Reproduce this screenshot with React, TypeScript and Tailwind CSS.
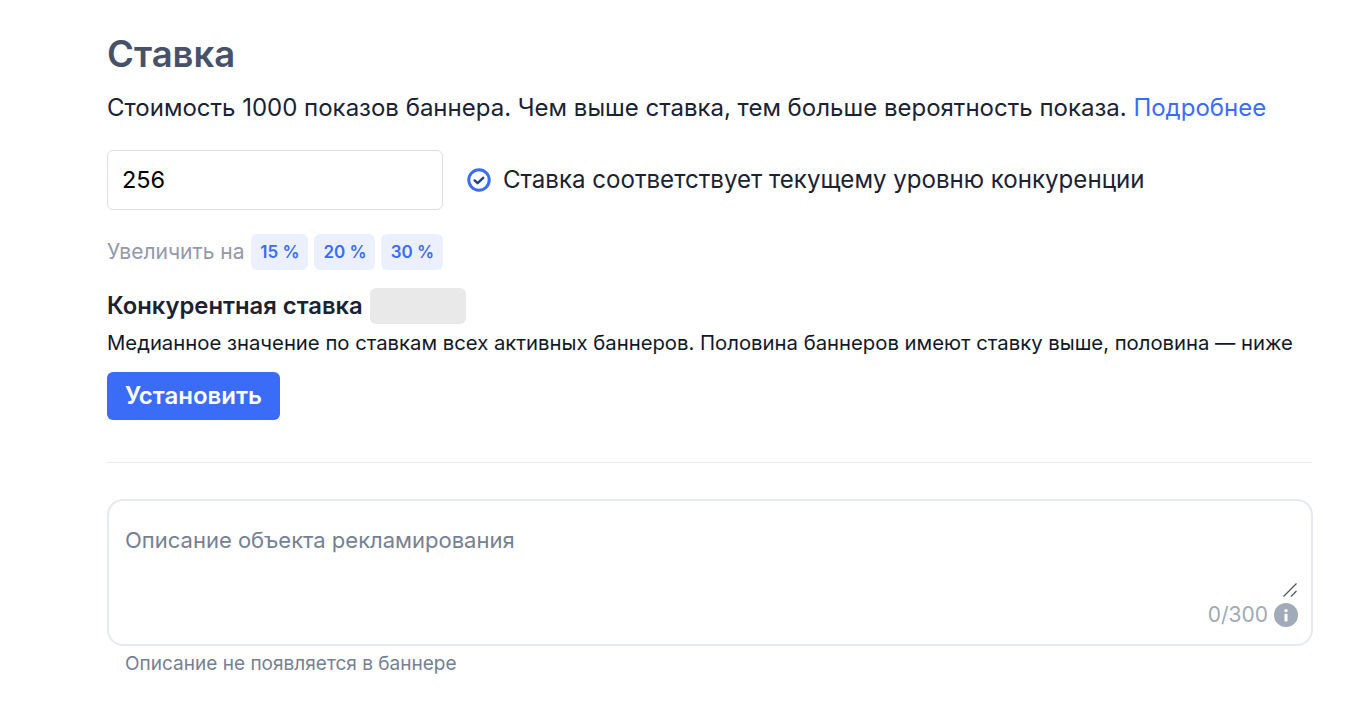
import { useState } from "react";

const STEPS = [
  { label: "15 %", width: "w-[57px]" },
  { label: "20 %", width: "w-[61px]" },
  { label: "30 %", width: "w-[62px]" },
];

function CheckIcon() {
  return (
    <svg width="24" height="24" viewBox="0 0 24 24" fill="none" className="shrink-0">
      <circle cx="12" cy="12" r="10.2" stroke="#3b6cf8" strokeWidth="3" />
      <path d="M7.6 12.4l3 2.8 5.6-5.4" stroke="#24407f" strokeWidth="2.4" strokeLinecap="round" strokeLinejoin="round" />
    </svg>
  );
}

function InfoIcon() {
  return (
    <svg width="24" height="24" viewBox="0 0 24 24" className="shrink-0">
      <circle cx="12" cy="12" r="12" fill="#a0aab8" />
      <circle cx="12" cy="7.6" r="1.7" fill="#fff" />
      <rect x="10.5" y="10.8" width="3" height="7.6" rx="0.6" fill="#fff" />
    </svg>
  );
}

function ResizeGrip() {
  return (
    <svg width="16" height="16" viewBox="0 0 16 16" fill="none" className="pointer-events-none absolute bottom-0 -right-[3px]">
      <path d="M1.5 14.5L14.5 1.5" stroke="#555" strokeWidth="1.2" />
      <path d="M9 14.5L14.5 9" stroke="#555" strokeWidth="1.2" />
    </svg>
  );
}

export default function App() {
  const [bid, setBid] = useState("256");

  return (
    <div className="h-[720px] overflow-hidden bg-white pl-[107px] pr-[45px] pt-[32px] font-['Inter',sans-serif] text-[#1a2233]">
      <h2 className="text-[36.5px] leading-[44px] font-semibold text-[#475268]">Ставка</h2>
      <p className="mt-[17px] text-[24px] leading-[30px] text-[#1a2233]">
        Стоимость 1000 показов баннера. Чем выше ставка, тем больше вероятность показа.{" "}
        <a href="#" className="text-[#3b6cf8]">Подробнее</a>
      </p>

      <div className="mt-[27px] flex items-center">
        <input
          value={bid}
          onChange={(e) => setBid(e.target.value)}
          className="h-[60px] w-[336px] rounded-[6px] border border-[#dcdde8] px-[14px] pb-[2px] text-[23.5px] text-black outline-none"
        />
        <div className="ml-[24px] mr-[12px]"><CheckIcon /></div>
        <span className="text-[24.08px] leading-[30px]">Ставка соответствует текущему уровню конкуренции</span>
      </div>

      <div className="mt-[24px] flex items-center">
        <span className="mr-[7px] text-[21px] leading-[36px] text-[#9299ab]">Увеличить на</span>
        <div className="flex gap-[6px]">
          {STEPS.map((s) => (
            <button key={s.label} className={`${s.width} h-[36px] rounded-[6px] bg-[#ebf0fc] pt-[1px] text-[17px] font-semibold text-[#3b6cf8]`}>
              {s.label}
            </button>
          ))}
        </div>
      </div>

      <div className="mt-[18px] flex items-center">
        <span className="text-[23.8px] leading-[36px] font-semibold text-[#1a2233]">Конкурентная ставка</span>
        <div className="ml-[7px] h-[36px] w-[96px] rounded-[6px] bg-[#e9e9e9]" />
      </div>
      <p className="mt-[1px] whitespace-nowrap text-[20.3px] leading-[36px] text-[#111827]">
        Медианное значение по ставкам всех активных баннеров. Половина баннеров имеют ставку выше, половина — ниже
      </p>

      <button className="mt-[11px] h-[48px] w-[173px] rounded-[6px] bg-[#3b6cf8] text-[24px] font-semibold text-white">
        Установить
      </button>

      <div className="mt-[42px] w-[1205px] border-t border-[#e9ebef]" />

      <div className="mt-[36px] h-[147px] w-[1206px] rounded-[16px] border-2 border-[#e6e9ee] px-[16px] pt-[24px]">
        <div className="flex flex-col">
          <div className="relative h-[73px] shrink-0">
            <textarea
              placeholder="Описание объекта рекламирования"
              className="block h-full w-full resize-none bg-transparent text-[22px] leading-[30px] text-[#1a2233] outline-none placeholder:text-[#768093]"
            />
            <ResizeGrip />
          </div>
          <div className="-mr-[3px] mt-[5px] flex shrink-0 items-center justify-end gap-[6px]">
            <span className="text-[21px] leading-[24px] text-[#a0aab8]">0/300</span>
            <InfoIcon />
          </div>
        </div>
      </div>
      <p className="ml-[18px] mt-[6px] text-[19.05px] leading-[24px] text-[#768093]">Описание не появляется в баннере</p>
    </div>
  );
}
